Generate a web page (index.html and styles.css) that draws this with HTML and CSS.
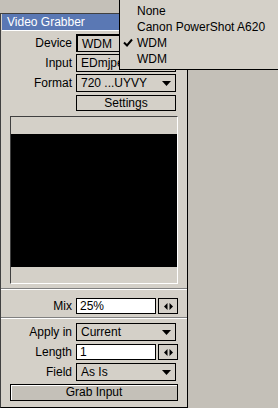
FILE: index.html
```
<!DOCTYPE html>
<html lang="en">
  <head>
    <meta charset="UTF-8" />
    <title>Video Grabber</title>
    <link rel="stylesheet" href="styles.css">
  </head>
  <body>
    <div class="panel">
      <div class="titlebar">Video Grabber</div>

      <div class="section top">
        <div class="row">
          <span class="label">Device</span>
          <div class="select focused">WDM</div>
        </div>
        <div class="row">
          <span class="label">Input</span>
          <div class="select">EDmjpeg</div>
        </div>
        <div class="row">
          <span class="label">Format</span>
          <div class="select">
            <span>720 ...UYVY</span>
            <svg class="arrow" width="9" height="5" viewBox="0 0 9 5"><polygon points="0,0 9,0 4.5,5" /></svg>
          </div>
        </div>
        <div class="row">
          <span class="label"></span>
          <div class="button">Settings</div>
        </div>

        <div class="preview">
          <div class="video"></div>
        </div>
      </div>

      <div class="section mix">
        <div class="row">
          <span class="label">Mix</span>
          <div class="field">25%</div>
          <div class="spin">
            <svg width="9" height="7" viewBox="0 0 9 7"><polygon points="0,3.5 3.5,0 3.5,7" /><polygon points="5.5,0 9,3.5 5.5,7" /></svg>
          </div>
        </div>
      </div>

      <div class="section bottom">
        <div class="row">
          <span class="label">Apply in</span>
          <div class="select">
            <span>Current</span>
            <svg class="arrow" width="9" height="5" viewBox="0 0 9 5"><polygon points="0,0 9,0 4.5,5" /></svg>
          </div>
        </div>
        <div class="row">
          <span class="label">Length</span>
          <div class="field">1</div>
          <div class="spin">
            <svg width="9" height="7" viewBox="0 0 9 7"><polygon points="0,3.5 3.5,0 3.5,7" /><polygon points="5.5,0 9,3.5 5.5,7" /></svg>
          </div>
        </div>
        <div class="row">
          <span class="label">Field</span>
          <div class="select">
            <span>As Is</span>
            <svg class="arrow" width="9" height="5" viewBox="0 0 9 5"><polygon points="0,0 9,0 4.5,5" /></svg>
          </div>
        </div>
        <div class="button wide">Grab Input</div>
      </div>
    </div>

    <!-- open device dropdown -->
    <div class="menu">
      <div class="item">None</div>
      <div class="item">Canon PowerShot A620</div>
      <div class="item checked">
        <svg class="check" width="10" height="9" viewBox="0 0 10 9"><polyline points="1,4.5 4,7.5 9,1.5" /></svg>
        WDM
      </div>
      <div class="item">WDM</div>
    </div>
  </body>
</html>
```

FILE: styles.css
```
body {
  margin: 0;
  padding-top: 13px;
  background-color: #c4c0b8;
  font-family: "Liberation Sans", Arial, sans-serif;
  font-size: 12px;
  color: #000;
  position: relative;
  height: 395px;
  overflow: hidden;
}

.panel {
  width: 186px;
  height: 393px;
  background-color: #d4d0c8;
  border-top: 1px solid #404040;
  border-left: 1px solid #404040;
  border-right: 1px solid #000;
  border-bottom: 1px solid #000;
  display: flex;
  flex-direction: column;
}

.titlebar {
  height: 16px;
  line-height: 16px;
  margin-left: 1px;
  padding-left: 5px;
  background-color: #5a78b4;
  color: #fff;
  border-bottom: 1px solid #fff;
}

.section {
  display: flex;
  flex-direction: column;
  gap: 2px;
  padding-left: 9px;
}

.section.top {
  padding-top: 3px;
}

.section.mix {
  margin-top: 4px;
  padding-top: 8px;
  padding-bottom: 2px;
  border-top: 1px solid #808080;
  box-shadow: inset 0 1px 0 #fff;
}

.section.bottom {
  padding-top: 5px;
  border-top: 1px solid #808080;
  box-shadow: inset 0 1px 0 #fff;
}

.row {
  display: flex;
  align-items: center;
  gap: 4px;
  height: 18px;
}

.label {
  width: 62px;
  text-align: right;
}

.select {
  width: 94px;
  height: 16px;
  line-height: 16px;
  border: 1px solid #000;
  padding-left: 4px;
  display: flex;
  justify-content: space-between;
  align-items: center;
  overflow: hidden;
  white-space: nowrap;
}

.select.focused {
  border-top-width: 2px;
  border-left-width: 2px;
  height: 15px;
  width: 93px;
}

.arrow {
  margin-right: 4px;
  fill: #000;
}

.button {
  width: 98px;
  height: 14px;
  line-height: 14px;
  border: 1px solid #000;
  text-align: center;
  background-color: #d4d0c8;
}

.button.wide {
  width: 166px;
  height: 15px;
  line-height: 15px;
  margin-top: 1px;
  background-color: #c4c0b8;
  box-shadow: inset 1px 1px 0 #fff;
}

.preview {
  width: 166px;
  height: 166px;
  margin-top: 2px;
  border-top: 1px solid #404040;
  border-left: 1px solid #404040;
  border-right: 1px solid #fff;
  border-bottom: 1px solid #fff;
  display: flex;
  align-items: center;
}

.video {
  width: 166px;
  height: 133px;
  background-color: #000;
}

.field {
  width: 75px;
  height: 14px;
  line-height: 14px;
  padding-left: 3px;
  border: 1px solid #000;
  background-color: #fff;
}

.spin {
  width: 18px;
  height: 14px;
  border: 1px solid #000;
  margin-left: -2px;
  display: flex;
  align-items: center;
  justify-content: center;
  fill: #000;
}

.menu {
  position: absolute;
  top: 0;
  left: 119px;
  width: 159px;
  height: 70px;
  padding-top: 3px;
  box-sizing: border-box;
  background-color: #d4d0c8;
  border-left: 1px solid #000;
  border-bottom: 1px solid #000;
}

.item {
  position: relative;
  height: 16px;
  line-height: 16px;
  padding-left: 17px;
}

.check {
  position: absolute;
  left: 3px;
  top: 3px;
  fill: none;
  stroke: #000;
  stroke-width: 2;
}
```
